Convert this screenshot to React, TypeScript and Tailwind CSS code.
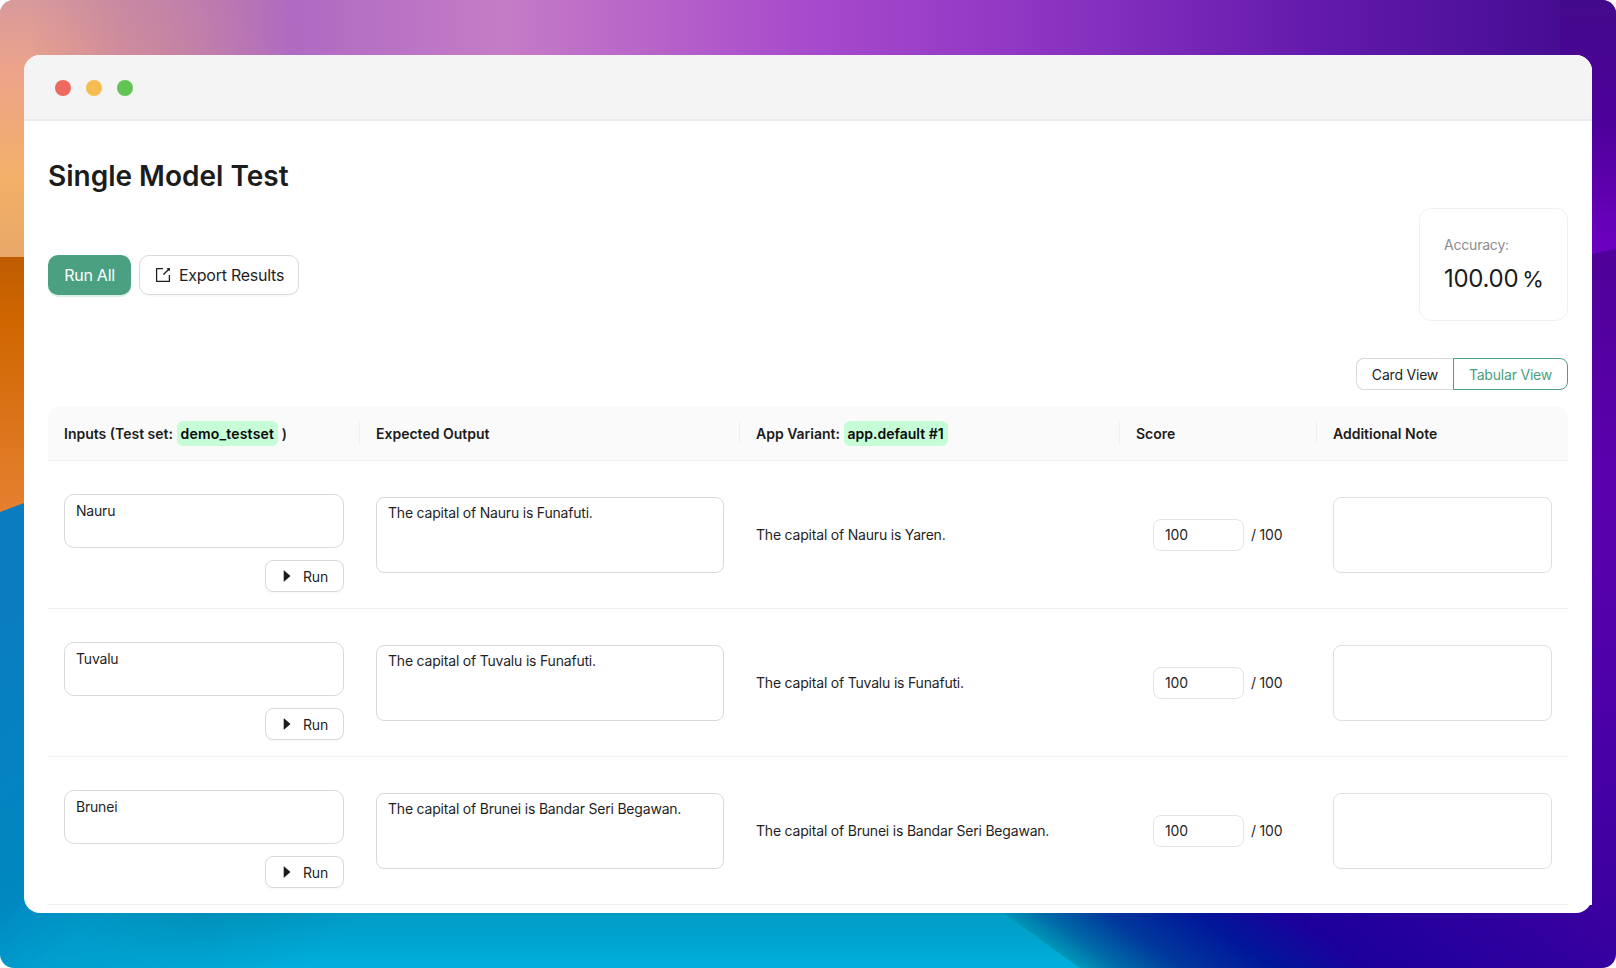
import { AiOutlineExport, AiOutlineCaretRight } from 'react-icons/ai'

const rows = [
  { country: 'Nauru', expected: 'The capital of Nauru is Funafuti.', output: 'The capital of Nauru is Yaren.' },
  { country: 'Tuvalu', expected: 'The capital of Tuvalu is Funafuti.', output: 'The capital of Tuvalu is Funafuti.' },
  { country: 'Brunei', expected: 'The capital of Brunei is Bandar Seri Begawan.', output: 'The capital of Brunei is Bandar Seri Begawan.' },
]

function Wallpaper() {
  return (
    <svg className="absolute inset-0 w-full h-full" viewBox="0 0 1616 968" preserveAspectRatio="none">
      <defs>
        <linearGradient id="top" x1="0" y1="0" x2="1616" y2="0" gradientUnits="userSpaceOnUse">
          <stop offset="0" stopColor="#c0829c" />
          <stop offset="0.1" stopColor="#b878ac" />
          <stop offset="0.18" stopColor="#ae6ac2" />
          <stop offset="0.31" stopColor="#c57cc6" />
          <stop offset="0.5" stopColor="#a84acc" />
          <stop offset="0.65" stopColor="#8c34c2" />
          <stop offset="0.82" stopColor="#6219ac" />
          <stop offset="1" stopColor="#3f0a8c" />
        </linearGradient>
        <linearGradient id="peach" x1="0" y1="0" x2="0" y2="257" gradientUnits="userSpaceOnUse">
          <stop offset="0" stopColor="#d99a9c" />
          <stop offset="0.3" stopColor="#eea488" />
          <stop offset="0.7" stopColor="#f2b068" />
          <stop offset="1" stopColor="#e8a868" />
        </linearGradient>
        <linearGradient id="peachFade" x1="0" y1="0" x2="300" y2="0" gradientUnits="userSpaceOnUse">
          <stop offset="0" stopColor="#fff" />
          <stop offset="0.08" stopColor="#fff" />
          <stop offset="0.4" stopColor="#777" />
          <stop offset="1" stopColor="#000" />
        </linearGradient>
        <mask id="fade">
          <rect width="300" height="257" fill="url(#peachFade)" />
        </mask>
        <linearGradient id="orange" x1="0" y1="257" x2="0" y2="510" gradientUnits="userSpaceOnUse">
          <stop offset="0" stopColor="#bf5c02" />
          <stop offset="0.25" stopColor="#cf6600" />
          <stop offset="1" stopColor="#e58030" />
        </linearGradient>
        <linearGradient id="blue" x1="0" y1="600" x2="300" y2="968" gradientUnits="userSpaceOnUse">
          <stop offset="0" stopColor="#0a7cc0" />
          <stop offset="0.5" stopColor="#0088c0" />
          <stop offset="0.65" stopColor="#00a0d0" />
          <stop offset="1" stopColor="#00b6e6" />
        </linearGradient>
        <linearGradient id="shadeV" x1="0" y1="905" x2="0" y2="968" gradientUnits="userSpaceOnUse">
          <stop offset="0" stopColor="#000" stopOpacity="0.16" />
          <stop offset="1" stopColor="#000" stopOpacity="0.04" />
        </linearGradient>
        <linearGradient id="shadeFade" x1="24" y1="0" x2="200" y2="0" gradientUnits="userSpaceOnUse">
          <stop offset="0" stopColor="#000" />
          <stop offset="1" stopColor="#fff" />
        </linearGradient>
        <mask id="shadeMask">
          <rect y="900" width="1616" height="68" fill="url(#shadeFade)" />
        </mask>
        <linearGradient id="deep" x1="1000" y1="913" x2="1220" y2="593" gradientUnits="userSpaceOnUse">
          <stop offset="0" stopColor="#0098b8" />
          <stop offset="0.06" stopColor="#006aa8" />
          <stop offset="0.15" stopColor="#00399c" />
          <stop offset="0.28" stopColor="#00189a" />
          <stop offset="0.42" stopColor="#1c009c" />
          <stop offset="0.9" stopColor="#3c00a0" />
        </linearGradient>
        <linearGradient id="rightTop" x1="0" y1="0" x2="0" y2="262" gradientUnits="userSpaceOnUse">
          <stop offset="0" stopColor="#430a8c" />
          <stop offset="0.5" stopColor="#4f009c" />
          <stop offset="1" stopColor="#7000c4" />
        </linearGradient>
        <linearGradient id="rightBottom" x1="0" y1="250" x2="0" y2="905" gradientUnits="userSpaceOnUse">
          <stop offset="0" stopColor="#4e0098" />
          <stop offset="0.35" stopColor="#5c00ae" />
          <stop offset="0.7" stopColor="#4c00a8" />
          <stop offset="1" stopColor="#3c00a0" />
        </linearGradient>
      </defs>
      <rect width="1616" height="257" fill="url(#top)" />
      <rect width="300" height="257" fill="url(#peach)" mask="url(#fade)" />
      <rect x="1560" width="56" height="270" fill="url(#rightTop)" />
      <rect y="257" width="40" height="260" fill="url(#orange)" />
      <path d="M0 512 L24 503 L40 498 L40 900 L1100 900 L1100 968 L0 968 Z" fill="url(#blue)" />
      <rect y="900" width="1100" height="68" fill="url(#shadeV)" mask="url(#shadeMask)" />
      <path d="M992 905 L1616 905 L1616 968 L1080 968 Z" fill="url(#deep)" />
      <path d="M1592 254 L1616 249 L1616 905 L1592 905 Z" fill="url(#rightBottom)" />
    </svg>
  )
}

function Tag({ children, wide }: { children: React.ReactNode; wide?: boolean }) {
  return <span className={`inline-block bg-[#c6fcd6] text-[#0a0a0a] font-semibold rounded-[6px] px-[4px] leading-[25px] ${wide ? 'tracking-[0.2px]' : ''}`}>{children}</span>
}

function HeadCell({ children, divider }: { children: React.ReactNode; divider?: boolean }) {
  return (
    <div className={`relative flex items-center px-4 ${divider ? "before:content-[''] before:absolute before:-left-px before:top-[16px] before:h-[22px] before:w-px before:bg-[#f0f0f0]" : ''}`}>
      {children}
    </div>
  )
}

function Row({ country, expected, output }: { country: string; expected: string; output: string }) {
  return (
    <div className="grid grid-cols-[312px_380px_380px_197px_251px] h-[148px] border-b border-[#f0f0f0] items-center">
      <div className="px-4 flex flex-col items-end gap-[12px] pt-[17px]">
        <textarea readOnly defaultValue={country} className="w-full h-[54px] resize-none rounded-[10px] border border-[#d9d9d9] px-[11px] py-[5px] leading-[22px] outline-none" />
        <button className="h-[32px] w-[79px] pr-[2px] flex items-center justify-center gap-[8px] rounded-[8px] border border-[#d9d9d9] shadow-[0_2px_0_rgba(0,0,0,0.02)]">
          <AiOutlineCaretRight className="text-[16px] text-[#1c1c1c]" />
          Run
        </button>
      </div>
      <div className="px-4">
        <textarea readOnly defaultValue={expected} className="block w-full h-[76px] resize-none rounded-[8px] border border-[#d9d9d9] px-[11px] py-[4px] leading-[22px] outline-none" />
      </div>
      <div className="px-4">{output}</div>
      <div className="pl-[33px] flex items-center gap-[7px]">
        <input readOnly defaultValue="100" className="w-[91px] h-[32px] rounded-[8px] border border-[#e4e4e4] px-[11px] outline-none" />
        <span>/ 100</span>
      </div>
      <div className="px-4">
        <textarea readOnly className="block w-full h-[76px] resize-none rounded-[8px] border border-[#e0e0e0] outline-none" />
      </div>
    </div>
  )
}

export default function App() {
  return (
    <div className="relative w-[1616px] h-[968px] overflow-hidden rounded-[14px] bg-white font-['Inter',sans-serif] text-[14px] tracking-[-0.2px] text-[#1f1f1f]">
      <Wallpaper />
      <div className="relative mx-[24px] mt-[55px] h-[858px] bg-white rounded-[16px] overflow-hidden">
        <div className="h-[66px] pt-[2px] bg-[#f4f4f4] border-b-2 border-[#ebebeb] flex items-center gap-[15px] pl-[31px]">
          <span className="w-[16px] h-[16px] rounded-full bg-[#ee6a5f]" />
          <span className="w-[16px] h-[16px] rounded-full bg-[#f5bd4f]" />
          <span className="w-[16px] h-[16px] rounded-full bg-[#61c454]" />
        </div>
        <div className="px-[24px]">
          <div className="flex justify-between items-start h-[240px]">
            <div>
              <h1 className="mt-[35px] text-[28px] leading-[40px] font-semibold tracking-normal text-[#1c1c1c]">Single Model Test</h1>
              <div className="mt-[59px] flex gap-[8px] text-[16px] tracking-[-0.25px]">
                <button className="w-[83px] h-[40px] rounded-[10px] bg-[#4aa081] text-white shadow-[0_2px_0_rgba(5,145,100,0.15)]">Run All</button>
                <button className="w-[160px] h-[40px] flex items-center justify-center gap-[7px] rounded-[10px] border border-[#d9d9d9] shadow-[0_2px_0_rgba(0,0,0,0.02)]">
                  <AiOutlineExport className="text-[18px]" />
                  Export Results
                </button>
              </div>
            </div>
            <div className="mt-[87px] w-[149px] h-[113px] rounded-[12px] border border-[#f0f0f0] p-[24px]">
              <div className="text-[#8c8c8c] leading-[22px] mt-[1px]">Accuracy:</div>
              <div className="mt-[7px] text-[24px] leading-[32px] tracking-[-0.3px] text-[#1c1c1c] whitespace-nowrap">
                <span>100.00</span>
                <span className="ml-[4px] text-[22px]">%</span>
              </div>
            </div>
          </div>
          <div className="flex justify-end -mt-[3px] h-[48px]">
            <button className="w-[97px] h-[32px] rounded-l-[8px] border border-r-0 border-[#d9d9d9]">Card View</button>
            <button className="w-[115px] h-[32px] rounded-r-[8px] border border-[#4aa081] text-[#4aa081]">Tabular View</button>
          </div>
          <div className="grid grid-cols-[312px_380px_380px_197px_251px] h-[55px] bg-[#fafafa] rounded-t-[12px] border-b border-[#f0f0f0] font-semibold tracking-normal text-[#1c1c1c]">
            <HeadCell>
              <span>Inputs (Test set:&nbsp;<Tag wide>demo_testset</Tag>&nbsp;)</span>
            </HeadCell>
            <HeadCell divider>Expected Output</HeadCell>
            <HeadCell divider>
              <span>App Variant:&nbsp;<Tag>app.default #1</Tag></span>
            </HeadCell>
            <HeadCell divider>Score</HeadCell>
            <HeadCell divider>Additional Note</HeadCell>
          </div>
          {rows.map(r => (
            <Row key={r.country} {...r} />
          ))}
        </div>
      </div>
    </div>
  )
}
